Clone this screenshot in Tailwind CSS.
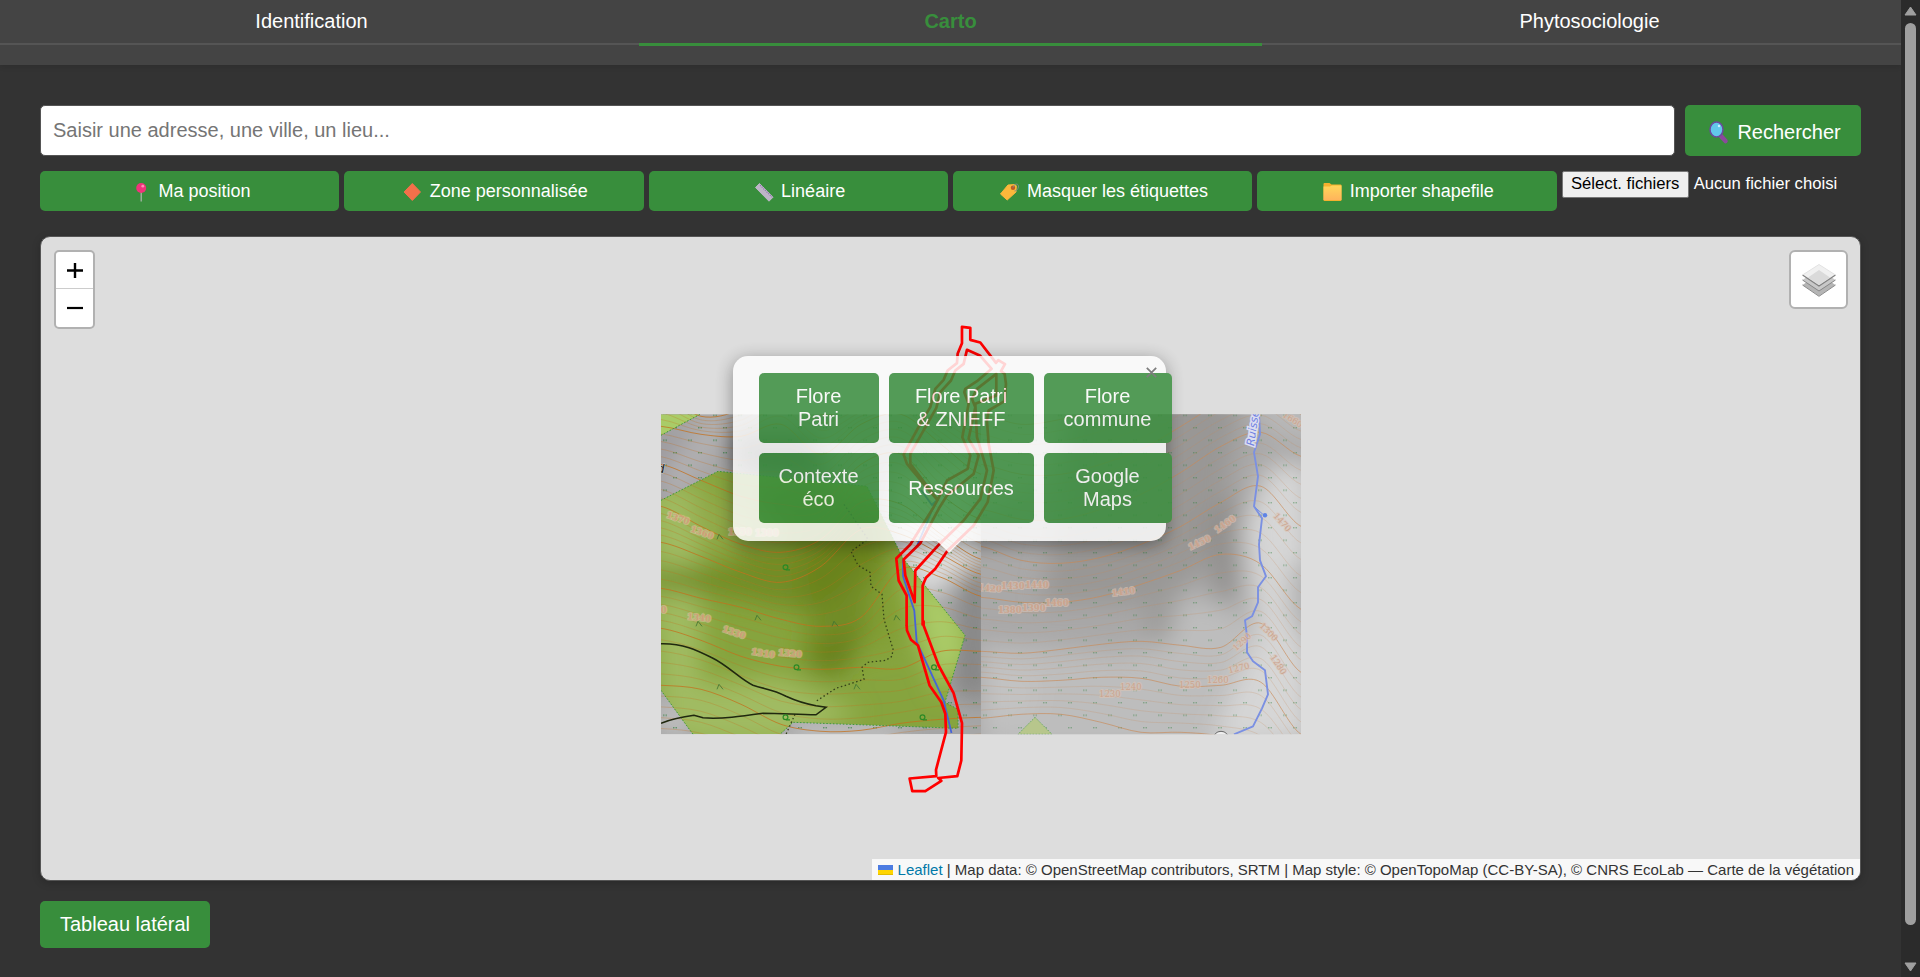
<!DOCTYPE html>
<html lang="fr">
<head>
<meta charset="utf-8">
<title>Carto</title>
<script src="https://cdn.jsdelivr.net/npm/@tailwindcss/browser@4"></script>
</head>
<body class="flex h-[977px] w-[1920px] overflow-hidden bg-[#333] font-['Liberation_Sans',Arial,sans-serif] text-white">
<div class="w-[1901px] shrink-0">
  <header class="h-[65px] bg-[#444] shadow-[0_2px_5px_rgba(0,0,0,0.1)]">
    <nav class="grid h-[45px] grid-cols-3 gap-4 border-b-2 border-[#555] text-center text-[20px] leading-[23px]">
      <a class="pt-[10px]">Identification</a>
      <a class="z-10 h-[46px] border-b-[3px] border-[#388e3c] pt-[10px] font-bold text-[#388e3c]">Carto</a>
      <a class="pt-[10px]">Phytosociologie</a>
    </nav>
  </header>
  <main class="px-10 pt-10">
    <div class="flex gap-[10px]">
      <input class="h-[51px] min-w-0 flex-1 rounded-[5px] border border-[#555] bg-white px-3 text-[20px] placeholder:text-[#757575]" placeholder="Saisir une adresse, une ville, un lieu...">
      <button class="flex h-[51px] w-[176px] items-center rounded-[5px] bg-[#388e3c] pl-5 pt-[2px] text-[20px]">
        <svg class="mr-[5px] h-[26px] w-[27.4px]" viewBox="0 0 27.4 26"><path d="M15.500 16.500l5 5.500" stroke="#8b4a9b" stroke-width="4.500" stroke-linecap="round"/><ellipse cx="11.500" cy="10.500" rx="6.500" ry="7.500" fill="#62c8ea" stroke="#6b4a9e" stroke-width="1.500"/><circle cx="14" cy="7" r="1.200" fill="#c9f1ff"/></svg>Rechercher</button>
    </div>
    <div class="mt-[15px] grid grid-cols-6 gap-[5px] text-[18px]">
      <button class="flex h-10 items-center justify-center rounded-[5px] bg-[#388e3c] pt-px">
        <svg class="mr-[5px] h-6 w-[24.6px]" viewBox="0 0 24.6 24"><path d="M12.2 10v11.500" stroke="#a9b5aa" stroke-width="1.300"/><circle cx="12.2" cy="8" r="5" fill="#f0337b"/><circle cx="13.800" cy="6.200" r="1.400" fill="#ff8fb5"/></svg>Ma position</button>
      <button class="flex h-10 items-center justify-center rounded-[5px] bg-[#388e3c] pt-px">
        <svg class="mr-[5px] h-6 w-[24.6px]" viewBox="0 0 24.6 24"><path d="M12.300 3.500L20.500 12L12.300 20.500L4.100 12Z" fill="#f3704a" stroke="#f3704a" stroke-linejoin="round"/></svg>Zone personnalisée</button>
      <button class="flex h-10 items-center justify-center rounded-[5px] bg-[#388e3c] pt-px">
        <svg class="mr-[5px] h-6 w-[24.6px]" viewBox="0 0 24.6 24"><path d="M7.500 3.500L21 17.200L17 21.200L3.500 7.500Z" fill="#bdb5c7" stroke="#bdb5c7" stroke-linejoin="round"/><path d="M8.200 5.200L20 17" stroke="#9277b3" stroke-width="1.500" stroke-dasharray="1 1.300"/></svg>Linéaire</button>
      <button class="flex h-10 items-center justify-center rounded-[5px] bg-[#388e3c] pt-px">
        <svg class="mr-[5px] h-6 w-[24.6px]" viewBox="0 0 24.6 24"><path d="M11 5L18 4.500L19.300 6L19 12L10.200 20L3.500 14Z" fill="#fcb83b" stroke="#fcb83b" stroke-linejoin="round"/><circle cx="16" cy="7.700" r="2.200" fill="#bd5b24"/><path d="M16 7.500C17 3 22 3 21.500 7C21 9.500 19 11 17.500 11" fill="none" stroke="#7d8c83"/></svg>Masquer les étiquettes</button>
      <button class="flex h-10 items-center justify-center rounded-[5px] bg-[#388e3c] pt-px">
        <svg class="mr-[5px] h-6 w-[24.6px]" viewBox="0 0 24.6 24"><defs><linearGradient id="folder" x2="0" y2="1"><stop stop-color="#ffd65a"/><stop offset="1" stop-color="#ffb45c"/></linearGradient></defs><path d="M3.500 4Q3.500 3 4.500 3H9.500L11.500 4.500H20.500Q21.500 4.500 21.500 5.500V20Q21.500 21 20.500 21H4.500Q3.500 21 3.500 20Z" fill="#f5b02e"/><path d="M3.500 6.500H10L12 5.500H21.500V20H3.500Z" fill="url(#folder)"/></svg>Importer shapefile</button>
      <div class="flex items-start whitespace-nowrap text-[16.67px] leading-[25px]">
        <span class="h-[27px] w-[127px] rounded-[2px] border border-[#767676] bg-[#efefef] text-center leading-6 text-black">Sélect. fichiers</span>
        <span class="ml-[5px]">Aucun fichier choisi</span>
      </div>
    </div>

    <section class="relative mt-[25px] h-[645px] overflow-hidden rounded-[10px] border border-[#555] bg-[#ddd] shadow-[0_2px_8px_rgba(0,0,0,0.2)]">
      <svg class="absolute inset-0 h-full w-full" viewBox="41 237 1819 643" fill="none">
        <defs>
          <filter id="b12" x="-50%" y="-50%" width="200%" height="200%"><feGaussianBlur stdDeviation="12"/></filter>
          <clipPath id="tile"><path d="M0 0H320V320H0Z"/></clipPath>
          <clipPath id="wood"><path d="M0 86L57 57L206 72L242 144L304 221L284 288L297 295L297 314L132 308L119 320H32L0 276ZM0 0H39L0 21Z"/></clipPath>
          <pattern id="marsh" width="25" height="25" patternUnits="userSpaceOnUse"><path d="M2 1h1.500M4.500 1H6M12 13.500h1.500M14.500 13.500H16" stroke="#2a7d36" stroke-width="1.100" opacity=".85"/></pattern>
        </defs>
        <g transform="translate(661 414.300)" clip-path="url(#tile)">
          <path d="M0 0H320V320H0Z" fill="#a6a6a6"/>
          <g filter="url(#b12)">
            <path d="M-20 20L60 15L50 60L-20 100Z" fill="#9c9a9e"/>
            <path d="M60 -10H70L60 30L10 90L0 60Z" fill="#b4b2b4"/>
            <path d="M70 20H150L170 70L80 60Z" fill="#626262"/>
            <path d="M230 60L320 40V140L262 190L225 110Z" fill="#dedede"/>
            <path d="M300 160L330 150V290L290 280Z" fill="#858585"/>
            <path d="M0 280L30 300V320H0ZM130 310H240V330H130Z" fill="#c6c6c6"/>
          </g>
          <path d="M0 0H320V320H0Z" fill="url(#marsh)"/>
          <g clip-path="url(#wood)">
            <path d="M0 0H320V320H0Z" fill="#86a43e"/>
            <g filter="url(#b12)">
              <path d="M-10 70H40V320H0ZM30 270L120 262L200 300L120 330H20Z" fill="#a0bb62"/>
              <path d="M60 90L160 60L220 110L232 190L200 225L170 265L140 250L150 200L80 185L-10 175V155L80 150Z" fill="#728d26"/>
              <path d="M135 150L170 120L215 80L230 130L165 195L145 190Z" fill="#6b831c"/>
              <path d="M155 230L205 213L185 258L155 260Z" fill="#68801a"/>
              <path d="M20 90L90 85L130 125L60 130Z" fill="#90a94a"/>
              <path d="M210 165L255 180L240 230L205 240Z" fill="#829f36"/>
              <path d="M245 145L300 190L310 240L280 280L260 230Z" fill="#aacb67"/>
            </g>
            <path d="M0 0H39L0 21Z" fill="#a9cc68"/>
          </g>
          <g id="leftContours"></g>
          <path d="M0 86L57 57L206 72L242 144L304 221L284 288L297 295V314L132 308L119 320M32 320L0 276M39 0L0 21" stroke="#3c9a3c" stroke-dasharray="1.500 1.800"/>
          <path d="M183 90L207 125L190 137L197 151L209 158L210 172L221 180L223 205L232 235L231 242L225 246L207 248L201 253L203 265L175 274L155 287M134 300L125 320" stroke="#344018" stroke-width="1.300" stroke-dasharray="1.500 2.500"/>
          <path d="M0 229.500C22 229 36 236 50 243C67 251 79 265 92 271C104 275 112 275 125 282C138 288 147 290 155 291.500L165 293L155 300.500C133 300 118 299 102 299C81 302 60 305 42 303.500L33 301C25 302 10 305 0 309" stroke="#20280f" stroke-width="1.600"/>
          <g font-family="DejaVu Serif, serif" font-size="8.500" font-weight="700" fill="#cf9f78" stroke="#e0c8a4" stroke-opacity=".55" stroke-width="2" paint-order="stroke">
            <text transform="translate(5 103) rotate(18)">1370</text><text transform="translate(29 117) rotate(20)">1360</text><text x="67" y="121">1350</text><text x="94" y="122">1380</text>
            <text transform="translate(26 205) rotate(6)">1340</text><text transform="translate(61 217) rotate(19)">1330</text><text transform="translate(90 240) rotate(9)">1310</text><text transform="translate(117 241) rotate(5)">1320</text><text x="-18" y="199">1350</text>
          </g>
          <text x="-4" y="59" font-family="Liberation Sans" font-size="13" font-style="italic" fill="#222" stroke="#ccc" paint-order="stroke">d</text>
          <g stroke="#2b8a25" stroke-width="1.200"><circle cx="124.500" cy="153" r="2.400"/><path d="M125 155.500h4"/><circle cx="135.500" cy="253" r="2.400"/><path d="M136 255.500h4"/><circle cx="273" cy="253" r="2.400"/><path d="M274 255.500h4"/><circle cx="261.500" cy="303" r="2.400"/><path d="M262 305.500h4"/><circle cx="124.500" cy="303" r="2.400"/><path d="M125 305.500h4"/></g>
          <path d="M35 212l2-5l4 5M94 206l2-5l4 5M171 212l2-5l4 5M233 206l2-5l4 5M193 275l2-5l4 5M56 275l2-5l4 5M56 125l2-5l4 5" stroke="#3f7433" opacity=".8"/>
        </g>
        <g transform="translate(981 414.300)" clip-path="url(#tile)">
          <path d="M0 0H320V320H0Z" fill="#a9a8a8"/>
          <g filter="url(#b12)">
            <path d="M-20 -20H90L70 60L-20 110Z" fill="#c4c3c2"/>
            <path d="M90 -20H260L240 130L190 190H60L80 90Z" fill="#999795"/>
            <path d="M0 230L150 240L210 180L250 190L300 260V340H0Z" fill="#bdbdbd"/>
            <path d="M0 240L60 260L50 310H0Z" fill="#c2c2c2"/>
            <path d="M290 50L330 50V330H230L275 220L262 110Z" fill="#d6d6d6"/>
            <path d="M262 -20H340V30L290 20Z" fill="#b9b9b9"/>
            <path d="M225 100L262 80L255 180L235 195Z" fill="#918f8d"/>
            <path d="M165 180L200 160L190 225L165 235Z" fill="#9c9b9a"/>
            <path d="M310 150H330V240L308 200Z" fill="#b2b2b2"/>
          </g>
          <path d="M0 0H320V320H0Z" fill="url(#marsh)" opacity=".65"/>
          <g id="rightContours"></g>
          <path d="M54 303L71 320H37Z" fill="#b7c68c" stroke="#67a867" stroke-dasharray="1.500 1.500"/>
          <path d="M278 0L279 20L273 38L277 62L273 92L281 104L278 130L279 146L285 162L277 173V188L271 202L264 206L266 222V238L272 247L284 256L287 280L281 294L272 312L253 320" stroke="#7b90e2" stroke-width="1.900" stroke-linejoin="round"/>
          <path d="M274 93L283 101" stroke="#6f8fe6"/><circle cx="284" cy="101" r="2.200" fill="#5e84e6"/>
          <text transform="translate(273 32) rotate(-82)" font-family="DejaVu Sans, sans-serif" font-size="11" font-style="italic" fill="#6f80e2" stroke="#dcdef0" stroke-width="3" paint-order="stroke">Ruisseau</text>
          <circle cx="240" cy="325" r="8" fill="#eee" stroke="#666"/>
          <g font-family="DejaVu Serif, serif" font-size="8.500" font-weight="700" fill="#cba48e" stroke="#dac4b6" stroke-opacity=".6" stroke-width="2" paint-order="stroke">
            <text transform="translate(-3 176) rotate(4)">1420</text><text x="20" y="175">1430</text><text x="44" y="174">1440</text>
            <text x="17" y="199">1380</text><text x="41" y="197">1390</text><text x="64" y="192">1460</text>
            <text transform="translate(131 182) rotate(-8)">1410</text><text transform="translate(209 136) rotate(-25)">1450</text><text transform="translate(236 119) rotate(-35)">1460</text>
            <g font-weight="400"><text x="118" y="283">1230</text><text x="139" y="276">1240</text><text x="198" y="274">1250</text><text x="226" y="269">1260</text><text transform="translate(248 259) rotate(-14)">1270</text><text transform="translate(255 237) rotate(-43)">1290</text><text transform="translate(278 212) rotate(45)">1300</text><text transform="translate(289 243) rotate(56)">1280</text><text transform="translate(292 102) rotate(48)">1470</text><text transform="translate(301 2) rotate(32)">1660</text></g>
          </g>
        </g>
        <path d="M921 490L932 505L936 501L917 546L903 560L903 576L914.300 610.700L916.700 642L943.500 700L951.500 733" stroke="#4663d8" stroke-width="1.800"/>
        <g stroke="#f00" stroke-width="2.700" stroke-linejoin="round" transform="translate(.3 .5)">
          <g transform="translate(860 320) scale(.33333)" stroke-width="8.100">
            <path d="M139 915V825L115 780L108 714L150 672L220 560L232 538L215 520L140 430L130 402L180 310L210 260L225 205L250 178L262 150L290 128L292 100L305 68V19L330 22V58L360 66L407 127L414 119L434 131L422 152L433 160L437 190L433 242L385 270L380 300L385 370L400 450L382 545L340 615L262 690L225 745L197 772L187 795V915"/>
            <path d="M163 845L135 765L130 717L180 668L238 560L260 525L340 460L355 405L325 355L345 260L335 235L350 205L408 160V225L345 250L350 350L380 450L360 535L310 600L240 668L165 750Z"/>
            <path d="M232 538L150 430V400L228 262L240 215L272 180L285 150L310 130L320 88L360 106L394 145L350 182L315 205L312 215L325 250L306 350L330 405L322 445L260 480L232 538"/>
          </g>
          <path d="M906.300 624.500L906.700 630L910.700 639.300L917.700 645L929.300 685L941 701.700L945 713.300L945.700 731.700L935.700 769.300L936 775.700L909.300 778L912 790.700H925L941 780.300L938 777.500L957 775.700L961 760L961.700 722.700L953.300 692.700L938.300 665L923.300 625V620"/>
        </g>
      </svg>

      <div class="absolute left-[13px] top-[13px] flex h-[79px] w-[41px] flex-col rounded-[5px] border-2 border-[#b1b1b1] bg-white pb-px text-black">
        <div class="flex h-[37px] items-center justify-center border-b border-[#ccc]"><svg class="h-4 w-4" viewBox="0 0 16 16" stroke="#000" stroke-width="2.400"><path d="M0 8.500H16M8 1V16"/></svg></div>
        <div class="flex flex-1 items-center justify-center"><svg class="h-4 w-4" viewBox="0 0 16 16" stroke="#000" stroke-width="2.200"><path d="M0 8H16"/></svg></div>
      </div>
      <div class="absolute right-[12px] top-[13px] flex h-[59px] w-[59px] items-center justify-center rounded-[6px] border-2 border-[#b1b1b1] bg-white pt-[2px]">
        <svg class="h-[33px] w-[34px]" viewBox="0 0 34 33" fill="none"><path d="M.5 21L17 32L33.500 21L17 10Z" fill="#b5b5b5"/><path d="M.5 21L17 32.300L33.500 21" stroke="#8a8a8a"/><path d="M.5 16L17 27L33.500 16L17 5Z" fill="#c8c8c8"/><path d="M.5 16L17 27L33.500 16" stroke="#858585"/><path d="M.5 11L17 .500L33.500 11L17 22Z" fill="#f0f0f0"/><path d="M17 6L28 13.500L17 21L6 13.500Z" fill="#dadada"/><path d="M.5 11L17 22L33.500 11" stroke="#808080" stroke-width="1.200"/><path d="M.5 11L17 .500L33.500 11" stroke="#e2e2e2"/></svg>
      </div>

      <div class="absolute left-[692px] top-[119px] h-[196px] w-[432.5px] opacity-[0.83]">
        <div class="h-[185px] rounded-[15px] bg-white pl-[25.5px] pt-[17px] shadow-[0_4px_18px_rgba(0,0,0,0.45)]">
          <div class="grid w-[413px] grid-cols-[120px_145px_128px] grid-rows-[70px_70px] gap-[10px] text-center text-[20px] leading-[23px]">
            <button class="rounded-[5px] bg-[#388e3c]">Flore<br>Patri</button>
            <button class="rounded-[5px] bg-[#388e3c]">Flore Patri<br>&amp; ZNIEFF</button>
            <button class="rounded-[5px] bg-[#388e3c]">Flore<br>commune</button>
            <button class="rounded-[5px] bg-[#388e3c]">Contexte<br>éco</button>
            <button class="rounded-[5px] bg-[#388e3c]">Ressources</button>
            <button class="rounded-[5px] bg-[#388e3c]">Google<br>Maps</button>
          </div>
        </div>
        <svg class="mx-auto h-[12px] w-[24px]" viewBox="0 0 24 12"><path d="M0 0H24L12 12Z" fill="#fff"/></svg>
        <svg class="absolute left-[412.5px] top-[11px] h-[11px] w-[11px]" viewBox="0 0 11 11"><path d="M.8 .8L10.200 10.200M10.200 .8L.8 10.200" stroke="#6a6a6a" stroke-width="1.700"/></svg>
      </div>

      <div class="absolute bottom-0 right-0 flex h-[21px] items-center whitespace-pre bg-white/80 pl-[6px] pr-[6px] pt-px text-[15px] text-[#333]"><svg class="mb-px mr-[5px] h-[10px] w-[15px]" viewBox="0 0 15 10"><path d="M0 0H15V5H0Z" fill="#4c7be1"/><path d="M0 5H15V10H0Z" fill="#ffd500"/><path d="M0 9H15V10H0Z" fill="#e0bc00"/></svg><span class="text-[#0078a8]">Leaflet</span> | Map data: © OpenStreetMap contributors, SRTM | Map style: © OpenTopoMap (CC-BY-SA), © CNRS EcoLab — Carte de la végétation</div>
    </section>

    <button class="mt-[20px] h-[47px] w-[170px] rounded-[5px] bg-[#388e3c] pb-[2px] text-[20px]">Tableau latéral</button>
  </main>
</div>
<aside class="flex w-[19px] shrink-0 flex-col items-center bg-[#2b2b2b] pt-[6px]">
  <svg class="h-[10px] w-[13px]" viewBox="0 0 13 10"><path d="M6.500 1L12 9H1Z" fill="#9f9f9f" stroke="#9f9f9f" stroke-linejoin="round"/></svg>
  <div class="mt-[7px] h-[902px] w-[11px] rounded-full bg-[#9f9f9f]"></div>
  <svg class="mt-[37px] h-[10px] w-[13px]" viewBox="0 0 13 10"><path d="M6.500 9L12 1H1Z" fill="#9f9f9f" stroke="#9f9f9f" stroke-linejoin="round"/></svg>
</aside>
<script>
// Index contours sampled every 40px; intermediate lines are interpolated between them.
const left = [
  [-50,-40,-38,-70,-60,-70,-60,-40,-10],
  [-22,2,-5,-30,0,-10,-20,0,20],
  [12,20,22,10,40,10,0,30,60],
  [50,66,82,90,90,50,40,80,105],
  [92,112,130,138,125,88,90,120,145],
  [128,142,158,168,152,115,120,140,160],
  [174,184,193,205,212,203,155,163,182],
  [214,226,242,252,255,253,254,237,237],
  [271,275,290,310,317,316,309,305,303],
  [325,330,345,360,362,360,355,350,345]];
const right = [
  [0,10,5,-5,-20,-50,-70,-70,-50],
  [50,60,60,50,35,12,-12,-25,0],
  [95,105,105,95,80,58,32,18,42],
  [132,146,149,143,130,112,88,72,112],
  [183,188,188,182,170,156,140,150,195],
  [237,239,235,230,227,231,233,209,258],
  [263,267,266,263,264,272,271,268,320],
  [304,300,300,308,318,318,322,335,370]];
function curve(ys) {
  let d = `M0 ${ys[0]}`;
  for (let i = 0; i < 8; i++) {
    const a = ys[Math.max(0, i - 1)], b = ys[i], c = ys[i + 1], e = ys[Math.min(8, i + 2)];
    d += `C${i * 40 + 13} ${b + (c - a) / 6} ${i * 40 + 27} ${c - (e - b) / 6} ${i * 40 + 40} ${c}`;
  }
  return d;
}
function contours(id, keys, color, strong, weak) {
  let out = '';
  keys.forEach((k, i) => {
    out += `<path d="${curve(k)}" stroke="${color}" stroke-width="1" opacity="${strong}"/>`;
    if (keys[i + 1]) for (let n = 1; n < 5; n++)
      out += `<path d="${curve(k.map((y, j) => y + (keys[i + 1][j] - y) * n / 5))}" stroke="${color}" stroke-width=".7" opacity="${weak}"/>`;
  });
  document.getElementById(id).innerHTML = out;
}
contours('leftContours', left, '#c4701c', .75, .4);
contours('rightContours', right, '#c98a58', .65, .32);
</script>
</body>
</html>
